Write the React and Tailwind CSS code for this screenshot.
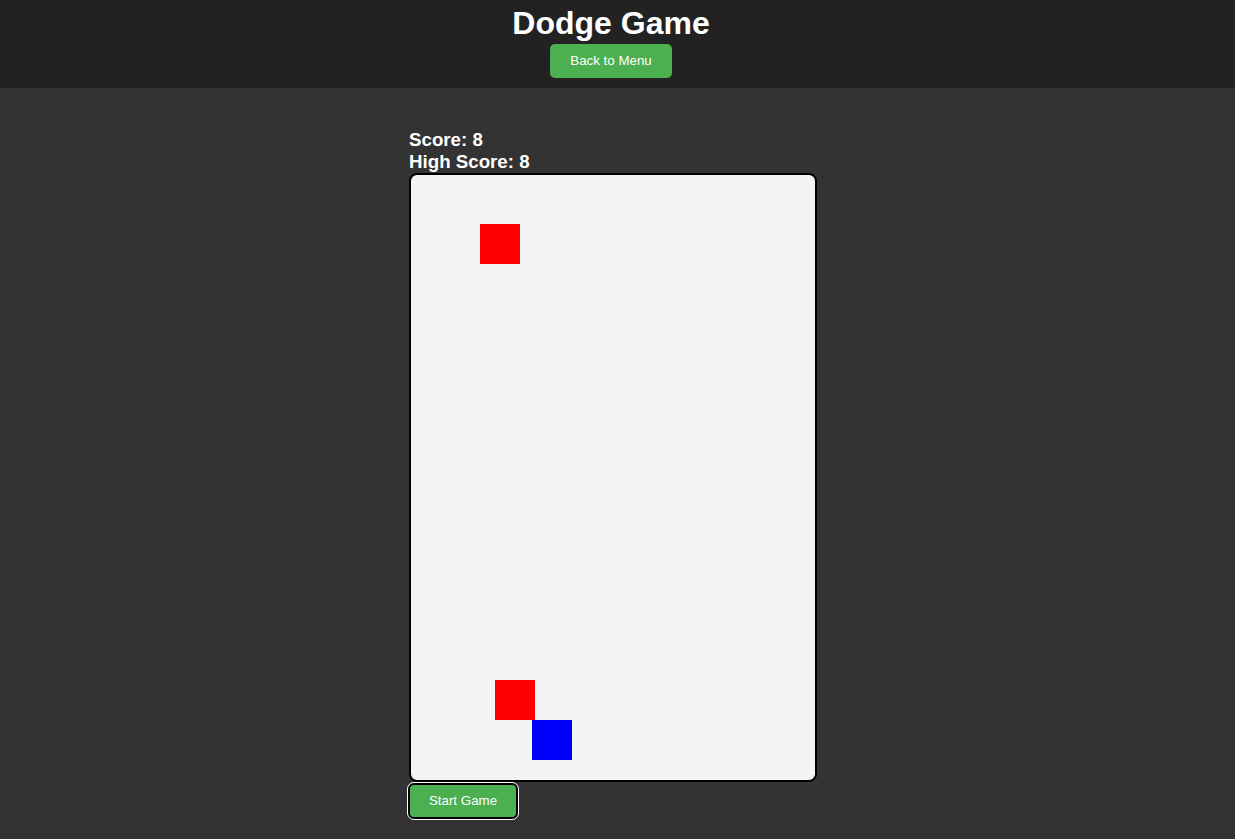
import React from "react";

const Square = ({ x, y, color }) => (
  <div
    className={`absolute w-10 h-10 ${color}`}
    style={{ left: x, top: y }}
  />
);

export default function App() {
  const enemies = [
    { x: 69, y: 49 },
    { x: 84, y: 505 },
  ];
  const player = { x: 121, y: 545 };

  return (
    <div className="min-h-[839px] bg-[#333333] text-white font-['Liberation_Sans',Arial,sans-serif]">
      <header className="bg-[#222222] h-[88px] flex flex-col items-center pt-[5px] pr-[13px]">
        <h1 className="text-[32px] font-bold leading-[37px]">Dodge Game</h1>
        <button className="mt-[2px] h-[34px] w-[122px] rounded-[5px] bg-[#4CAF50] text-[13.33px] text-white">
          Back to Menu
        </button>
      </header>

      <main className="flex justify-center pt-[41px] pr-[9px]">
        <div className="flex flex-col items-start w-[408px]">
          <div className="text-[18.72px] font-bold leading-[22px]">Score: 8</div>
          <div className="text-[18.72px] font-bold leading-[22px]">High Score: 8</div>
          <div className="relative w-[408px] h-[609px] border-2 border-black rounded-[8px] bg-[#f4f4f4]">
            {enemies.map((e, i) => (
              <Square key={i} x={e.x} y={e.y} color="bg-[#ff0000]" />
            ))}
            <Square x={player.x} y={player.y} color="bg-[#0000ff]" />
          </div>
          <button className="mt-[1px] -ml-[1px] h-[36px] w-[110px] rounded-[6px] border-2 border-black bg-[#4CAF50] text-[13.33px] text-white outline outline-1 outline-white">
            Start Game
          </button>
        </div>
      </main>
    </div>
  );
}
